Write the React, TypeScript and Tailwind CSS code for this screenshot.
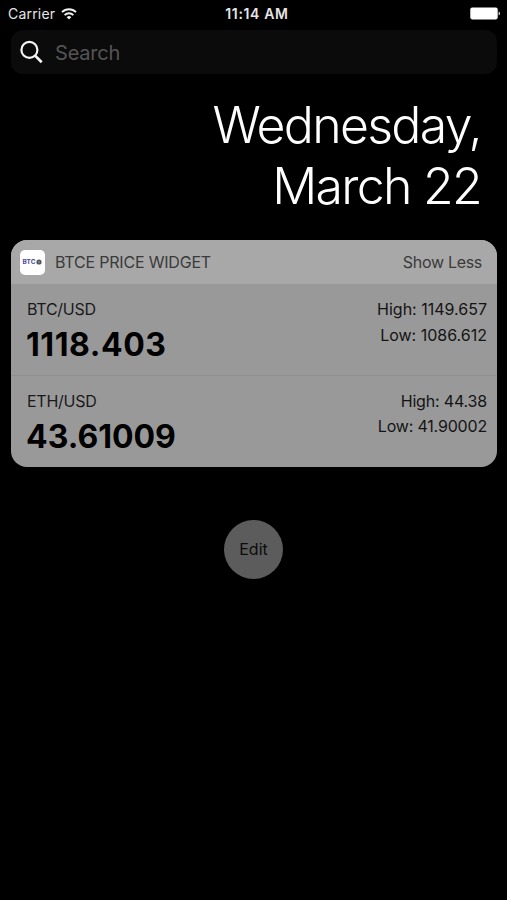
// Today view of the phone: status bar, search field, date and the price widget.
import clsx from "clsx";

type Pair = {
  name: string;
  last: string;
  high: string;
  low: string;
  wide?: boolean;
};

const pairs: Pair[] = [
  { name: "BTC/USD", last: "1118.403", high: "1149.657", low: "1086.612", wide: true },
  { name: "ETH/USD", last: "43.61009", high: "44.38", low: "41.90002" },
];

function WifiIcon() {
  return (
    <svg width="16" height="12" viewBox="0 0 16 12" fill="none" stroke="#f0f0f0" strokeWidth="1.9">
      <path d="M1 4.2a9.9 9.9 0 0 1 14 0" />
      <path d="M3.6 7.1a6.2 6.2 0 0 1 8.8 0" />
      <path d="M8 11.6 5.7 9.2a3.3 3.3 0 0 1 4.6 0z" fill="#f0f0f0" stroke="none" />
    </svg>
  );
}

function BatteryIcon() {
  return (
    <svg width="31" height="13" viewBox="0 0 31 13" fill="#fff">
      <rect x="0.3" y="0.6" width="27.4" height="11.8" rx="1.8" />
      <path d="M28.7 4.6a2.1 2.1 0 0 1 0 3.8z" />
    </svg>
  );
}

function StatusBar() {
  return (
    <div className="grid h-[30px] grid-cols-3 items-center pr-[6px] pb-[3px] pl-[8px] text-[#e6e6e6]">
      <div className="flex items-center gap-[6px] text-[14px] tracking-[0.2px]">
        Carrier
        <WifiIcon />
      </div>
      <div className="pl-[5px] text-center text-[14px] font-semibold tracking-[0.65px]">11:14 AM</div>
      <div className="flex justify-end">
        <BatteryIcon />
      </div>
    </div>
  );
}

function SearchField() {
  return (
    <div className="mr-[10px] ml-[11px] flex h-[44px] items-center gap-[11px] rounded-[12px] bg-[#0b0b0b] pl-[9px]">
      <svg width="24" height="24" viewBox="0 0 24 24" fill="none" stroke="#f5f5f5" strokeWidth="2.2">
        <circle cx="9.4" cy="9.9" r="8" />
        <path d="m15.1 15.6 6.6 6.6" strokeWidth="2.7" />
      </svg>
      <span className="pt-[2px] text-[20px] tracking-[-0.2px] text-[#555]">Search</span>
    </div>
  );
}

function PairRow({ pair }: { pair: Pair }) {
  return (
    <div className="flex h-[91px] justify-between pt-[13px] pr-[10px] pl-[16px]">
      <div>
        <div className="text-[16px] leading-[25px] tracking-[-0.25px] text-[#1a1a1a]">{pair.name}</div>
        <div
          className={clsx(
            "-ml-px text-[32px] leading-[46px] font-bold text-black",
            pair.wide && "tracking-[0.55px]",
          )}
        >
          {pair.last}
        </div>
      </div>
      <div
        className={clsx(
          "text-right text-[16px] text-[#141414]",
          pair.wide ? "leading-[25.5px]" : "leading-[25px] tracking-[-0.18px]",
        )}
      >
        <div>High: {pair.high}</div>
        <div>Low: {pair.low}</div>
      </div>
    </div>
  );
}

function AppIcon() {
  return (
    <div className="flex h-[25px] w-[25px] items-center justify-center gap-px rounded-[5px] bg-white">
      <span className="text-[6.5px] leading-none font-bold text-[#4a4a92]">BTC</span>
      <svg width="6" height="6" viewBox="0 0 6 6">
        <circle cx="3" cy="3" r="2.6" fill="#55555a" />
        <circle cx="3" cy="3" r="0.8" fill="#aaa" />
      </svg>
    </div>
  );
}

function PriceWidget() {
  return (
    <section className="mr-[10px] ml-[11px] overflow-hidden rounded-[16px] bg-[#999]">
      <header className="flex h-[44px] items-center bg-[#a8a8a8] pr-[15px] pl-[9px] text-[16px] text-[#3a3a3a]">
        <AppIcon />
        <h2 className="ml-[10px] tracking-[-0.2px]">BTCE PRICE WIDGET</h2>
        <span className="ml-auto tracking-[-0.3px]">Show Less</span>
      </header>
      <PairRow pair={pairs[0]} />
      <div className="h-px bg-[#8f8f8f]" />
      <PairRow pair={pairs[1]} />
    </section>
  );
}

export default function App() {
  return (
    <main className="flex h-[900px] w-[507px] flex-col overflow-hidden bg-black font-['Inter',sans-serif]">
      <StatusBar />
      <SearchField />
      <h1 className="mt-[21px] pr-[26px] text-right text-[50px] leading-[61px] font-light tracking-[-1.7px] text-white">
        Wednesday,
        <br />
        March 22
      </h1>
      <div className="mt-[23px]">
        <PriceWidget />
      </div>
      <button className="mt-[53px] h-[59px] w-[59px] self-center rounded-full bg-[#5c5c5c] pb-[2px] text-[16px] text-[#0c0c0c]">
        Edit
      </button>
    </main>
  );
}
